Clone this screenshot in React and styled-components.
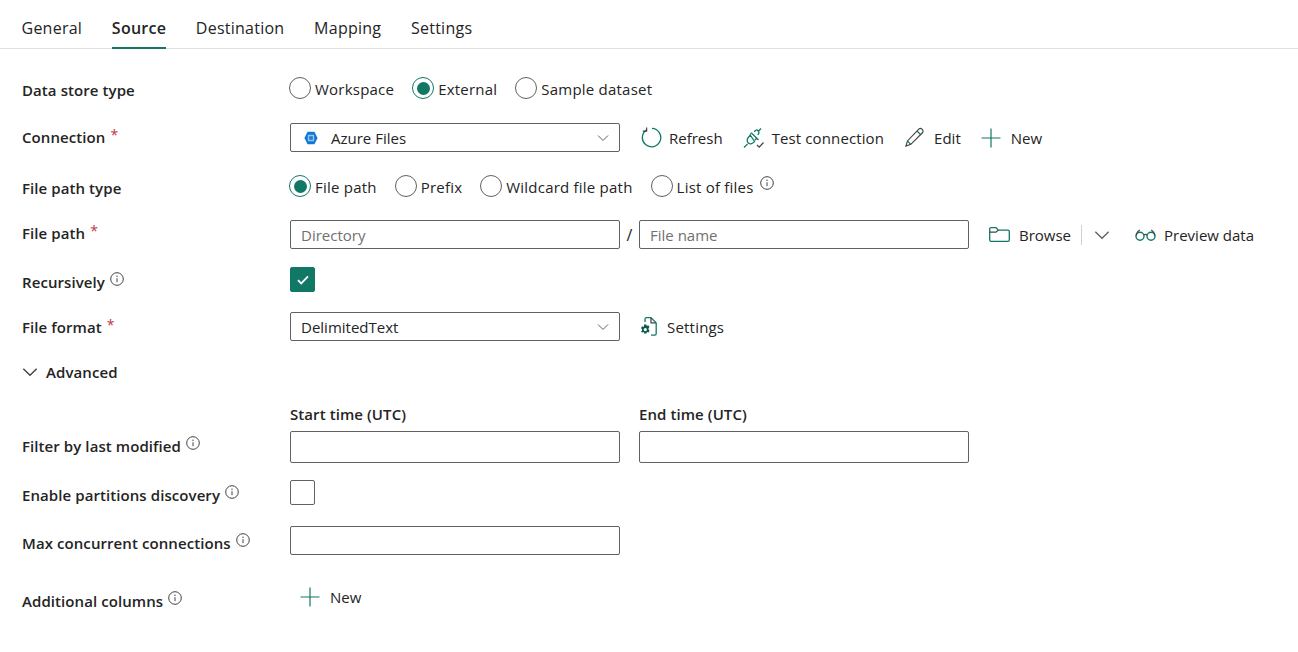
import React from 'react';
import styled, { createGlobalStyle } from 'styled-components';

const Global = createGlobalStyle`
  html, body { margin: 0; padding: 0; background: #fff; }
  body { font-family: "Open Sans", "Noto Sans", "Liberation Sans", sans-serif; color: #242424; font-size: 15px; }
  * { box-sizing: border-box; }
`;
const Page = styled.div`width: 1298px; height: 652px; overflow: hidden; background: #fff;`;
const Tabs = styled.div`display: flex; gap: 29.7px; height: 49px; padding: 0 0 0 21.5px; border-bottom: 1px solid #e0e0e0;`;
const Tab = styled.div`
  height: 49px; padding-top: 15px; font-size: 16px; line-height: 26px; letter-spacing: 0.25px;
  font-weight: ${p => (p.$active ? 600 : 400)};
  border-bottom: ${p => (p.$active ? '2px solid #117865' : '0')};
`;
const Form = styled.div`padding-left: 22px; display: flex; flex-direction: column;`;
const Row = styled.div`
  display: grid; grid-template-columns: 268px 1fr; align-items: center;
  height: ${p => p.$h}px; margin-top: ${p => p.$top}px;
`;
const Label = styled.div`
  display: flex; align-items: center; gap: 5px; font-weight: 600; font-size: 15px; letter-spacing: 0.08px; line-height: 20px;
  padding-top: ${p => p.$pt || 0}px; padding-bottom: ${p => p.$pb || 0}px;
`;
const Req = styled.span`color: #c4314b; font-size: 14px; font-weight: 400; align-self: flex-start; line-height: 16px;`;
const Controls = styled.div`display: flex; align-items: center; gap: ${p => p.$gap ?? 0}px;`;
const Radios = styled(Controls)`margin-left: -1px; height: 22px; margin-top: -2px;`;
const RadioItem = styled.label`display: flex; align-items: center; gap: 4px; margin-right: ${p => p.$mr ?? 18}px; line-height: 20px;`;
const RadioText = styled.span`padding-top: 2px; letter-spacing: 0.22px;`;
const RadioDot = styled.span`
  width: 22px; height: 22px; border-radius: 50%; flex: none; display: flex; align-items: center; justify-content: center;
  border: 1px solid ${p => (p.$on ? '#117865' : '#616161')};
  &::after { content: ''; display: ${p => (p.$on ? 'block' : 'none')}; width: 13px; height: 13px; border-radius: 50%; background: #117865; }
`;
const Field = styled.div`
  width: 330px; height: ${p => p.$h || 29}px; flex: none; border: 1px solid #616161; border-radius: 2px; padding: 1px 10px 0;
  display: flex; align-items: center; gap: 13px; color: ${p => (p.$ph ? '#707070' : '#242424')};
`;
const FieldText = styled.span`flex: 1;`;
const IconSlot = styled.span`display: flex; margin-left: 3px;`;
const ActionBtn = styled.div`display: flex; align-items: center; gap: ${p => p.$gap ?? 8}px; margin-left: ${p => p.$ml || 0}px; line-height: 20px; letter-spacing: ${p => p.$ls || 0}px;`;
const Slash = styled.span`width: 19px; text-align: center; font-size: 16px;`;
const Divider = styled.span`width: 1px; height: 20px; background: #d1d1d1; margin: 0 12px 0 10px;`;
const Check = styled.div`
  width: 25px; height: 25px; border-radius: 2px; display: flex; align-items: center; justify-content: center;
  border: 1px solid ${p => (p.$on ? '#117865' : '#616161')}; background: ${p => (p.$on ? '#117865' : '#fff')};
`;
const Toggle = styled.div`display: flex; align-items: center; gap: 8px; font-weight: 600; letter-spacing: 0.08px;`;
const TimeHead = styled.div`display: flex; gap: 19px; font-weight: 600; letter-spacing: 0.08px; line-height: 18px;`;
const TimeCell = styled.span`width: 330px;`;
const Spacer = styled.div``;
const Svg = styled.svg`flex: none; display: block;`;
const InfoSvg = styled(Svg)`margin-top: -6px;`;

const T = '#117865';
const Info = () => (
  <InfoSvg width="14" height="14" viewBox="0 0 14 14" fill="none">
    <circle cx="7" cy="7" r="6.3" stroke="#424242" />
    <path d="M7 6.2v4" stroke="#424242" />
    <circle cx="7" cy="4.2" r=".7" fill="#424242" />
  </InfoSvg>
);
const Chevron = ({ size = 12, color = '#616161' }) => (
  <Svg width={size} height={size} viewBox="0 0 12 12" fill="none"><path d="M1 3.5l5 5 5-5" stroke={color} strokeWidth="1" /></Svg>
);
const Plus = () => (
  <Svg width="20" height="20" viewBox="0 0 20 20" fill="none"><path d="M10 .5v19M.5 10h19" stroke={T} strokeWidth="1.2" /></Svg>
);
const Refresh = () => (
  <Svg width="21" height="21" viewBox="0 0 21 21" fill="none">
    <path d="M6 2.6A9.2 9.2 0 1 0 11 1.4" stroke={T} strokeWidth="1.3" />
    <path d="M5.6 .4v3.8H1.8" stroke="#424242" strokeWidth="1.2" />
  </Svg>
);
const Plug = () => (
  <Svg width="22" height="22" viewBox="0 0 22 22" fill="none">
    <path d="M1 20.5l3.6-3.6M18 1.5l-3.2 3.2M9 6.5l6.5 6.5M11 4.8l2-1.6c1.4-1 3.7 1.7 2.8 3.2l-1 1.6" stroke={T} strokeWidth="1.3" />
    <path d="M7.2 8.2c-3 2.8-3.6 5.2-2.4 7.2 1.6 2.4 4.6 1.6 6.8-1l-4.4-6.2z" stroke={T} strokeWidth="1.3" />
    <path d="M9 5.6l-2 2M14 11l-2 2" stroke={T} strokeWidth="1.3" />
    <path d="M14 18l2.2 2.2L20.5 15.5" stroke="#424242" strokeWidth="1.2" />
  </Svg>
);
const Pencil = () => (
  <Svg width="21" height="21" viewBox="0 0 22 22" fill="none">
    <path d="M15.5 2.2c1-1 2.6-.8 3.6.2s1.2 2.6.2 3.6L7.2 18.2 2 20l1.6-5.4L15.5 2.2z" stroke="#424242" strokeWidth="1.2" />
    <path d="M13.6 4.2l4.2 4.2M3.6 14.6l3.6 3.6" stroke={T} strokeWidth="1.3" />
  </Svg>
);
const Folder = () => (
  <Svg width="21" height="15" viewBox="0 0 21 15" fill="none">
    <path d="M.7 2C.7 1.2 1.3.7 2 .7h5l2.4 2.4H19c.8 0 1.3.6 1.3 1.3V13c0 .7-.6 1.3-1.3 1.3H2c-.7 0-1.3-.6-1.3-1.3V2z" stroke={T} strokeWidth="1.3" />
    <path d="M.7 5.2h6.2l2.5-2.1" stroke="#424242" strokeWidth="1.2" />
  </Svg>
);
const Glasses = () => (
  <Svg width="21" height="12" viewBox="0 0 21 12" fill="none">
    <circle cx="5" cy="7.2" r="4" stroke={T} strokeWidth="1.4" />
    <circle cx="16" cy="7.2" r="4" stroke={T} strokeWidth="1.4" />
    <path d="M9 6c1-.8 2-.8 3 0M1 6.6C1.6 4 2.6 2 4.8 1M20 6.6C19.4 4 18.4 2 16.2 1" stroke="#424242" strokeWidth="1.2" />
  </Svg>
);
const DocGear = () => (
  <Svg width="17" height="19" viewBox="0 0 17 19" fill="none">
    <path d="M5 5V2C5 1.3 5.6.7 6.2.7H11l5.2 5.2v10.9c0 .8-.6 1.4-1.4 1.4H11" stroke={T} strokeWidth="1.3" />
    <path d="M11 .9v5h5" stroke="#424242" strokeWidth="1.2" />
    <path d="M4.2 7.4h2.2l.4 1.5 1.4-.6 1.3 1.7-1 1.2.1 1.3 1 1.2-1.2 1.8-1.5-.6-.5 1.5H4.2l-.4-1.5-1.5.6L1 14.7l1-1.2v-1.3l-1-1.2 1.2-1.7 1.5.6z" fill="#0c5a4c" />
    <circle cx="5.3" cy="12.6" r="1.6" fill="#fff" />
  </Svg>
);
const AzureFiles = () => (
  <Svg width="14" height="14" viewBox="0 0 14 14" fill="none">
    <path d="M3.6.8h6.8L13.6 7l-3.2 6.2H3.6L.4 7z" fill="#0f78d4" />
    <rect x="3.8" y="3.8" width="6.4" height="6.4" rx=".6" fill="#8fc7f5" />
    <rect x="5.2" y="5.2" width="3.6" height="3.6" fill="#2b79c9" />
  </Svg>
);
const Tick = () => (
  <Svg width="12" height="10" viewBox="0 0 12 10" fill="none"><path d="M1 5.2l3.2 3.2L11 1.4" stroke="#fff" strokeWidth="1.8" /></Svg>
);

const tabs = ['General', 'Source', 'Destination', 'Mapping', 'Settings'];

export default function App() {
  return (
    <Page>
      <Global />
      <Tabs>{tabs.map(t => <Tab key={t} $active={t === 'Source'}>{t}</Tab>)}</Tabs>
      <Form>
        <Row $top={25} $h={30}>
          <Label $pt={1}>Data store type</Label>
          <Radios>
            <RadioItem><RadioDot /><RadioText>Workspace</RadioText></RadioItem>
            <RadioItem><RadioDot $on /><RadioText>External</RadioText></RadioItem>
            <RadioItem><RadioDot /><RadioText>Sample dataset</RadioText></RadioItem>
          </Radios>
        </Row>
        <Row $top={19} $h={29}>
          <Label $pb={1}>Connection <Req>*</Req></Label>
          <Controls>
            <Field><IconSlot><AzureFiles /></IconSlot><FieldText>Azure Files</FieldText><Chevron /></Field>
            <ActionBtn $ml={21} $gap={7}><Refresh />Refresh</ActionBtn>
            <ActionBtn $ml={20} $gap={7} $ls={0.12}><Plug />Test connection</ActionBtn>
            <ActionBtn $ml={20} $gap={9}><Pencil />Edit</ActionBtn>
            <ActionBtn $ml={20} $gap={10}><Plus />New</ActionBtn>
          </Controls>
        </Row>
        <Row $top={20} $h={30}>
          <Label $pt={1}>File path type</Label>
          <Radios>
            <RadioItem><RadioDot $on /><RadioText>File path</RadioText></RadioItem>
            <RadioItem><RadioDot /><RadioText>Prefix</RadioText></RadioItem>
            <RadioItem><RadioDot /><RadioText>Wildcard file path</RadioText></RadioItem>
            <RadioItem $mr={6}><RadioDot /><RadioText>List of files</RadioText></RadioItem>
            <Info />
          </Radios>
        </Row>
        <Row $top={18} $h={29}>
          <Label $pb={4}>File path <Req>*</Req></Label>
          <Controls>
            <Field $ph>Directory</Field>
            <Slash>/</Slash>
            <Field $ph>File name</Field>
            <ActionBtn $ml={20} $gap={9}><Folder />Browse</ActionBtn>
            <Divider />
            <Chevron size={16} />
            <ActionBtn $ml={25} $gap={8}><Glasses />Preview data</ActionBtn>
          </Controls>
        </Row>
        <Row $top={18} $h={25}>
          <Label $pt={5}>Recursively <Info /></Label>
          <Controls><Check $on><Tick /></Check></Controls>
        </Row>
        <Row $top={20} $h={29}>
          <Label $pt={1}>File format <Req>*</Req></Label>
          <Controls>
            <Field><FieldText>DelimitedText</FieldText><Chevron /></Field>
            <ActionBtn $ml={20} $gap={10} $ls={0.2}><DocGear />Settings</ActionBtn>
          </Controls>
        </Row>
        <Row $top={16} $h={30}>
          <Toggle><Chevron size={16} color="#424242" />Advanced</Toggle>
          <Spacer />
        </Row>
        <Row $top={18} $h={18}>
          <Spacer />
          <TimeHead><TimeCell>Start time (UTC)</TimeCell><TimeCell>End time (UTC)</TimeCell></TimeHead>
        </Row>
        <Row $top={8} $h={32}>
          <Label $pb={2}>Filter by last modified <Info /></Label>
          <Controls $gap={19}><Field $h={32} /><Field $h={32} /></Controls>
        </Row>
        <Row $top={17} $h={25}>
          <Label $pt={5}>Enable partitions discovery <Info /></Label>
          <Controls><Check /></Controls>
        </Row>
        <Row $top={21} $h={29}>
          <Label $pt={4}>Max concurrent connections <Info /></Label>
          <Controls><Field /></Controls>
        </Row>
        <Row $top={27} $h={30}>
          <Label $pt={8}>Additional columns <Info /></Label>
          <Controls><ActionBtn $ml={10} $gap={10}><Plus />New</ActionBtn></Controls>
        </Row>
      </Form>
    </Page>
  );
}
